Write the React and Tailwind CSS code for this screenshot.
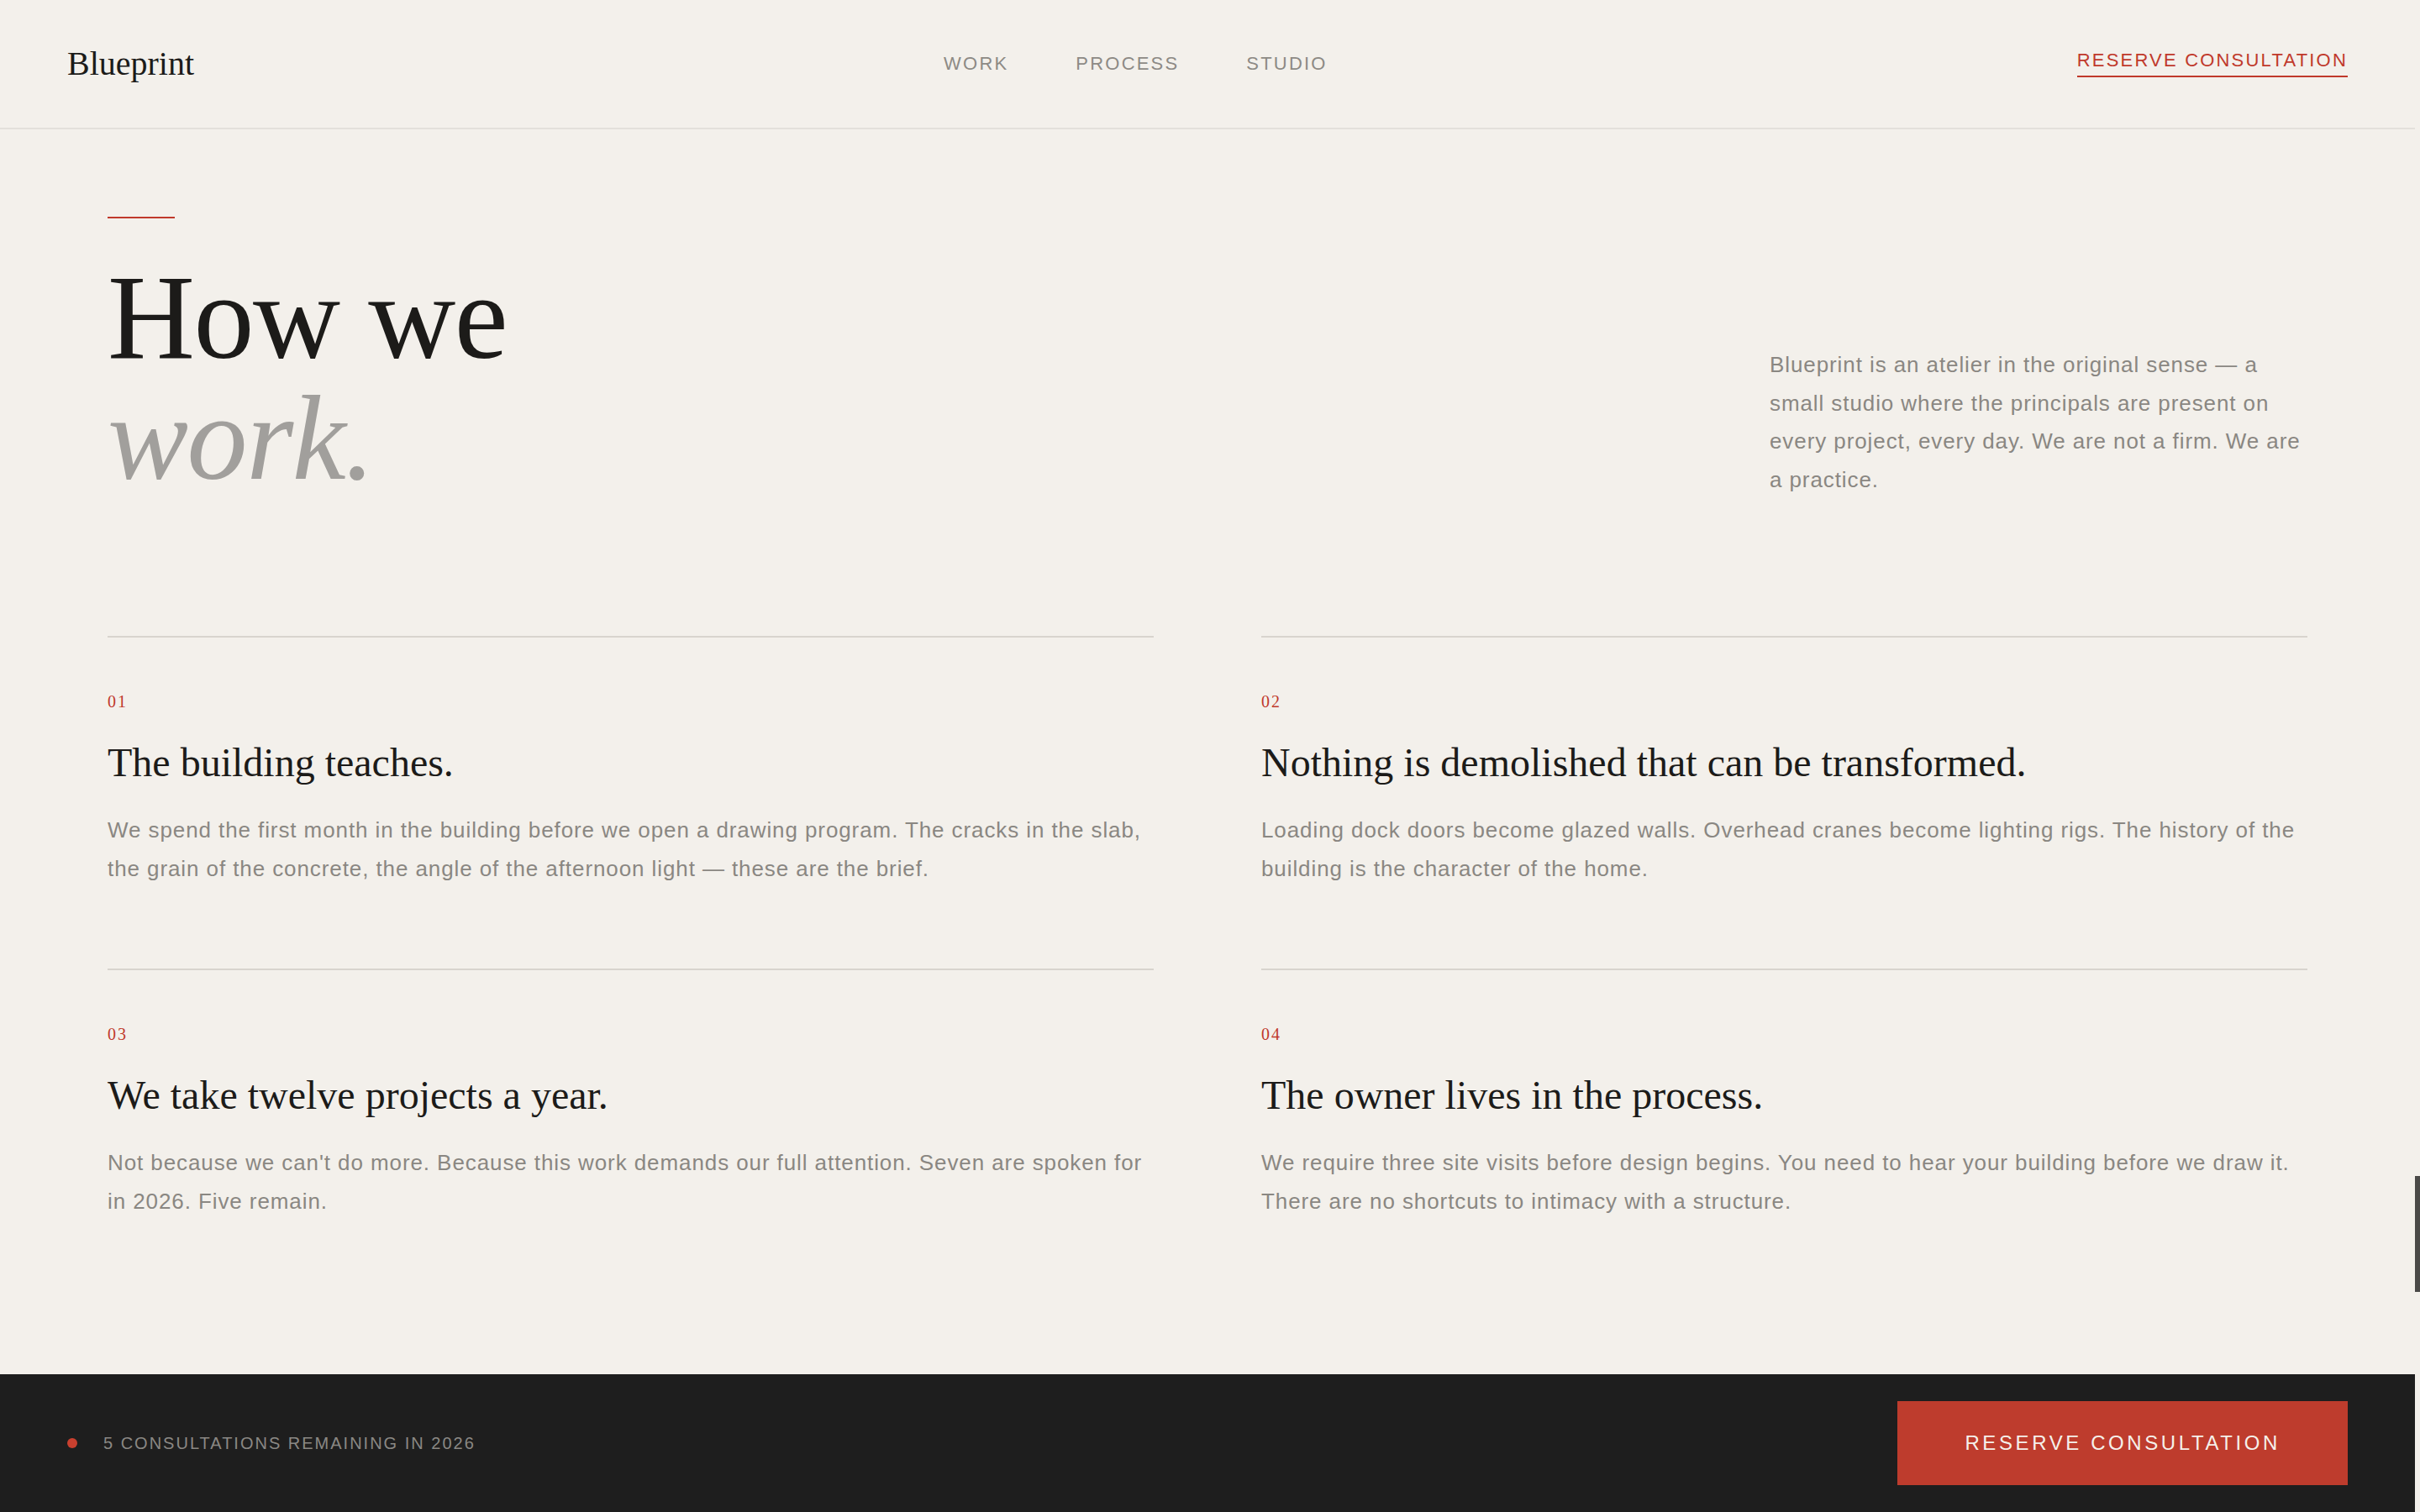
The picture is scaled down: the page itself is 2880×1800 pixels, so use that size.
const serif = { fontFamily: '"Liberation Serif", "Times New Roman", serif' };

const steps = [
  {
    n: '01',
    title: 'The building teaches.',
    body: 'We spend the first month in the building before we open a drawing program. The cracks in the slab, the grain of the concrete, the angle of the afternoon light — these are the brief.',
  },
  {
    n: '02',
    title: 'Nothing is demolished that can be transformed.',
    body: 'Loading dock doors become glazed walls. Overhead cranes become lighting rigs. The history of the building is the character of the home.',
  },
  {
    n: '03',
    title: 'We take twelve projects a year.',
    body: "Not because we can't do more. Because this work demands our full attention. Seven are spoken for in 2026. Five remain.",
  },
  {
    n: '04',
    title: 'The owner lives in the process.',
    body: 'We require three site visits before design begins. You need to hear your building before we draw it. There are no shortcuts to intimacy with a structure.',
  },
];

function Header() {
  return (
    <header className="h-[154px] shrink-0 border-b-2 border-[#e3e0db] px-[80px] flex items-center justify-between">
      <div className="text-[40px] leading-none text-[#1c1b19]" style={serif}>
        Blueprint
      </div>
      <nav className="flex items-center gap-[80px] text-[22px] leading-none tracking-[0.1em] text-[#8d8a85]">
        <a>WORK</a>
        <a>PROCESS</a>
        <a>STUDIO</a>
      </nav>
      <a className="text-[22px] leading-none tracking-[0.1em] text-[#c0392b] border-b-2 border-[#c0392b] pb-[7px]">
        RESERVE CONSULTATION
      </a>
    </header>
  );
}

function Step({ n, title, body }) {
  return (
    <div className="border-t-2 border-[#d8d4ce] pt-[66px] pb-[96px]">
      <div className="text-[20px] leading-none tracking-[0.1em] text-[#c0392b]" style={serif}>
        {n}
      </div>
      <h3 className="mt-[34px] text-[48px] leading-[58px] text-[#1c1b19]" style={serif}>
        {title}
      </h3>
      <p className="mt-[29px] text-[26px] leading-[45.5px] tracking-[0.035em] text-[#8a8782]">{body}</p>
    </div>
  );
}

export default function App() {
  return (
    <div
      className="flex h-screen w-full bg-[#f3f0eb] overflow-hidden"
      style={{ fontFamily: '"Liberation Sans", Arial, sans-serif' }}
    >
      <div className="flex-1 flex flex-col min-w-0">
        <Header />

        <main className="flex-1 px-[128px] pt-[104px]">
          {/* Intro */}
          <section className="flex items-end justify-between">
            <div>
              <div className="h-[2px] w-[80px] bg-[#c0392b] mb-[46px]" />
              <h1 className="text-[144px] leading-none tracking-[-0.01em] text-[#1c1b19]" style={serif}>
                How we
                <br />
                <span className="italic text-[#a19f9c]">work.</span>
              </h1>
            </div>
            <p className="w-[640px] text-[26px] leading-[45.5px] tracking-[0.035em] text-[#8a8782]">
              Blueprint is an atelier in the original sense — a small studio where the principals are present on every project, every day. We are not a firm. We are a practice.
            </p>
          </section>

          {/* Steps */}
          <section className="mt-[163px] grid grid-cols-2 gap-x-[128px]">
            {steps.map((s) => (
              <Step key={s.n} {...s} />
            ))}
          </section>
        </main>

        <footer className="h-[164px] shrink-0 bg-[#1e1e1e] px-[80px] flex items-center justify-between">
          <div className="flex items-center gap-[31px]">
            <span className="w-[12px] h-[12px] rounded-full bg-[#c9402f]" />
            <span className="text-[20px] leading-none tracking-[0.1em] text-[#8a8884]">
              5 CONSULTATIONS REMAINING IN 2026
            </span>
          </div>
          <button className="h-[100px] px-[80px] bg-[#be3c2d] text-[24px] leading-none tracking-[0.15em] text-[#f5f0ea]">
            RESERVE CONSULTATION
          </button>
        </footer>
      </div>

      {/* scrollbar */}
      <div className="w-[6px] shrink-0">
        <div className="mt-[1400px] h-[138px] bg-[#4a4947]" />
      </div>
    </div>
  );
}
